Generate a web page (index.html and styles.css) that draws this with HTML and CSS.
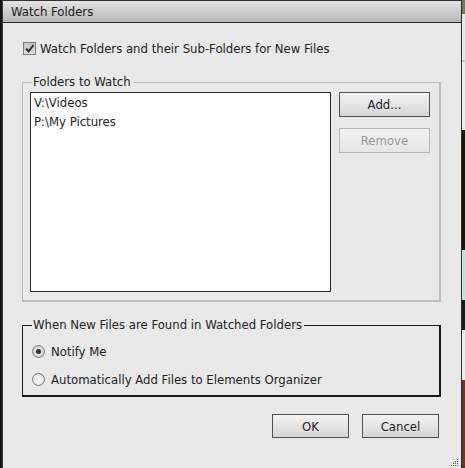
FILE: index.html
```html
<!DOCTYPE html>
<html>
<head>
<meta charset="utf-8">
<link rel="stylesheet" href="styles.css">
</head>
<body>
<div class="screen">
  <div class="window">
    <div class="titlebar">Watch Folders</div>
    <div class="content">
      <label class="check-row">
        <span class="checkbox">
          <svg width="11" height="11" viewBox="0 0 11 11"><path d="M2 5.5 L4.6 8.4 L9.4 2.2" fill="none" stroke="#333" stroke-width="2"/></svg>
        </span>
        <span>Watch Folders and their Sub-Folders for New Files</span>
      </label>

      <fieldset class="group group-folders">
        <legend>Folders to Watch</legend>
        <div class="folders-body">
          <div class="listbox">
            <div class="item">V:\Videos</div>
            <div class="item">P:\My Pictures</div>
          </div>
          <div class="side-buttons">
            <button class="btn">Add...</button>
            <button class="btn disabled">Remove</button>
          </div>
        </div>
      </fieldset>

      <fieldset class="group group-when">
        <legend>When New Files are Found in Watched Folders</legend>
        <div class="radio-row"><span class="radio checked"></span><span>Notify Me</span></div>
        <div class="radio-row"><span class="radio"></span><span>Automatically Add Files to Elements Organizer</span></div>
      </fieldset>

      <div class="footer">
        <button class="btn btn-wide">OK</button>
        <button class="btn btn-wide">Cancel</button>
      </div>
      <div class="grip">
        <svg width="9" height="9" viewBox="0 0 9 9" fill="#555"><rect x="7" y="1" width="1" height="1"/><rect x="5" y="3" width="1" height="1"/><rect x="7" y="3" width="1" height="1"/><rect x="3" y="5" width="1" height="1"/><rect x="5" y="5" width="1" height="1"/><rect x="7" y="5" width="1" height="1"/><rect x="1" y="7" width="1" height="1"/><rect x="3" y="7" width="1" height="1"/><rect x="5" y="7" width="1" height="1"/><rect x="7" y="7" width="1" height="1"/></svg>
      </div>
    </div>
  </div>
  <div class="backdrop"></div>
</div>
</body>
</html>
```

FILE: styles.css
```css
* { box-sizing: border-box; }
html, body { margin: 0; padding: 0; }
body {
  width: 465px;
  height: 468px;
  overflow: hidden;
  background: #151515;
  font-family: "DejaVu Sans Condensed", "DejaVu Sans", sans-serif;
  font-size: 13px;
  color: #222;
}
.screen {
  display: flex;
  height: 468px;
  padding-left: 2px;
}
.window {
  width: 460px;
  height: 468px;
  background: #e9e9e9;
  border-left: 1px solid #3a3a3a;
  border-right: 1px solid #2a2a2a;
  display: flex;
  flex-direction: column;
  position: relative;
}
.backdrop {
  flex: 1;
  background: linear-gradient(#7a7466 0 14px, #e8e8e8 14px 60px, #c8c8c8 60px 62px, #eee 62px 130px, #1a1208 130px 250px, #ccdede 250px 300px, #1a1a1a 300px 330px, #eee 330px 380px, #7a3020 380px 468px);
}
.titlebar {
  height: 23px;
  border-top: 1px solid #333;
  border-bottom: 1px solid #2e2e2e;
  background: linear-gradient(#e4e4e4, #c9c9c9 60%, #b7b7b7);
  padding-left: 8px;
  font-size: 13px;
  line-height: 21px;
  color: #1c1c1c;
}
.content {
  flex: 1;
  padding: 18px 20px 0 19px;
  display: flex;
  flex-direction: column;
  position: relative;
}
.check-row {
  display: flex;
  align-items: center;
  gap: 4px;
  height: 14px;
  margin-left: 1px;
}
.checkbox {
  width: 13px;
  height: 13px;
  border: 1px solid #7e7e7e;
  background: linear-gradient(#c4c4c4, #dedede);
  display: flex;
  align-items: center;
  justify-content: center;
}
.group {
  margin: 0;
  padding: 0;
  min-width: 0;
}
.group legend {
  padding: 0 2px 0 1px;
  margin-left: 9px;
  line-height: 14px;
}
.group-folders {
  margin-top: 20px;
  border-style: solid;
  border-width: 1px 2px 2px 1px;
  border-color: #bdbdbd;
  height: 227px;
}
.folders-body {
  display: flex;
  padding: 3px 0 0 7px;
  gap: 8px;
}
.listbox {
  width: 301px;
  height: 200px;
  background: #fff;
  border: 1px solid #2c2c2c;
  padding: 0 3px;
}
.item {
  height: 19px;
  line-height: 19px;
}
.side-buttons {
  display: flex;
  flex-direction: column;
  gap: 11px;
}
.btn {
  font-family: "DejaVu Sans Condensed", "DejaVu Sans", sans-serif;
  font-size: 13px;
  color: #1e1e1e;
  width: 91px;
  height: 25px;
  padding: 0;
  border: 1px solid #505050;
  background: linear-gradient(#f3f3f3, #e4e4e4 55%, #d6d6d6);
  border-radius: 0;
}
.btn.disabled {
  color: #9a9a9a;
  border-color: #b4b4b4;
  background: linear-gradient(#f2f2f2, #e6e6e6);
}
.group-when {
  margin-top: 16px;
  border-style: solid;
  border-color: #1a1a1a;
  border-width: 1px 2px 2px 1px;
  height: 79px;
  padding: 12px 0 0 9px;
}
.group-when legend { margin-left: 0; padding-left: 1px; }
.radio-row {
  display: flex;
  align-items: center;
  gap: 6px;
  height: 14px;
  margin-bottom: 14px;
}
.radio {
  width: 13px;
  height: 13px;
  border-radius: 50%;
  border: 1px solid #7a7a7a;
  background: radial-gradient(circle, #fafafa, #dcdcdc);
  position: relative;
}
.radio.checked { background: radial-gradient(circle, #e6e6e6, #cfcfcf); }
.radio.checked::after {
  content: "";
  position: absolute;
  left: 3px;
  top: 3px;
  width: 5px;
  height: 5px;
  border-radius: 50%;
  background: #333;
}
.footer {
  display: flex;
  justify-content: flex-end;
  gap: 13px;
  margin-top: 17px;
  padding-right: 2px;
}
.btn-wide { width: 77px; height: 24px; }
.grip {
  position: absolute;
  right: 2px;
  bottom: 1px;
  line-height: 0;
}
```
